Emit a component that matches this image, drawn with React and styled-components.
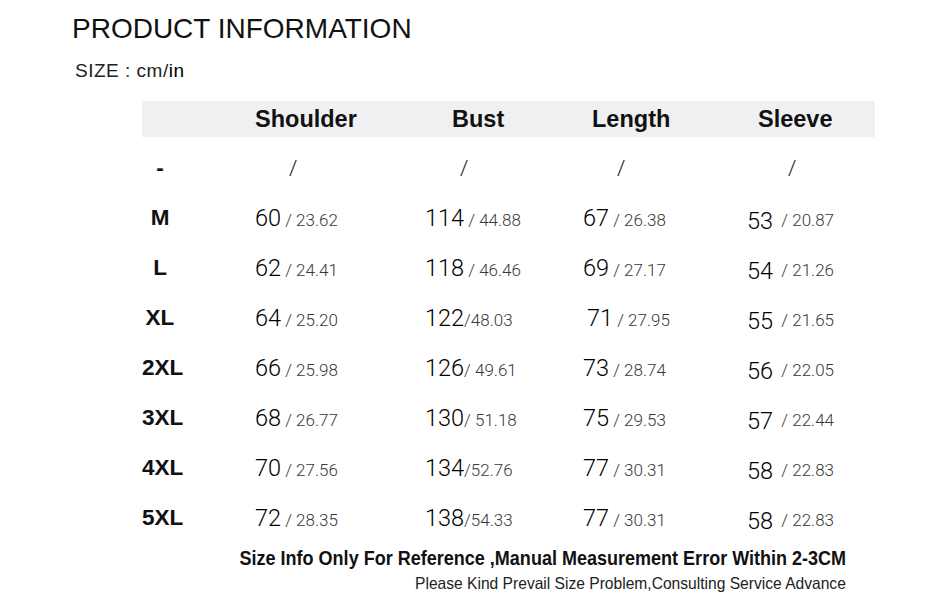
import React from 'react'
import styled, { createGlobalStyle } from 'styled-components'

const GlobalStyle = createGlobalStyle`
  html, body {
    margin: 0;
    padding: 0;
    background: #fff;
  }
  body {
    font-family: "Liberation Sans", Arial, sans-serif;
    color: #111;
  }
`;

const columns = [
  { title: 'Shoulder', headPad: 0, slashPad: 34 },
  { title: 'Bust', headPad: 27, slashPad: 35 },
  { title: 'Length', headPad: 9, slashPad: 34 },
  { title: 'Sleeve', headPad: 11, slashPad: 41, drop: 3 },
];

const rows = [
  { size: 'M', values: [['60', ' / 23.62'], ['114', ' / 44.88'], ['67', ' / 26.38'], ['53', '  / 20.87']] },
  { size: 'L', values: [['62', ' / 24.41'], ['118', ' / 46.46'], ['69', ' / 27.17'], ['54', '  / 21.26']] },
  { size: 'XL', values: [['64', ' / 25.20'], ['122', '/48.03'], ['71', ' / 27.95', 4], ['55', '  / 21.65']] },
  { size: '2XL', values: [['66', ' / 25.98'], ['126', '/ 49.61'], ['73', ' / 28.74'], ['56', '  / 22.05']] },
  { size: '3XL', values: [['68', ' / 26.77'], ['130', '/ 51.18'], ['75', ' / 29.53'], ['57', '  / 22.44']] },
  { size: '4XL', values: [['70', ' / 27.56'], ['134', '/52.76'], ['77', ' / 30.31'], ['58', '  / 22.83']] },
  { size: '5XL', values: [['72', ' / 28.35'], ['138', '/54.33'], ['77', ' / 30.31'], ['58', '  / 22.83']] },
];

const App = () => {
  return (
    <Page>
      <GlobalStyle />
      <Title>PRODUCT INFORMATION</Title>
      <Unit>SIZE : cm/<b>in</b></Unit>
      <Table>
        <HeadBand>
          <Cell />
          {columns.map(c => (
            <HeadLabel key={c.title} pad={c.headPad}>{c.title}</HeadLabel>
          ))}
        </HeadBand>
        <Row>
          <Cell><SizeLabel>-</SizeLabel></Cell>
          {columns.map(c => (
            <Slash key={c.title} pad={c.slashPad}>/</Slash>
          ))}
        </Row>
        {rows.map(r => (
          <Row key={r.size}>
            <Cell><SizeLabel>{r.size}</SizeLabel></Cell>
            {r.values.map(([cm, inch, shift], i) => (
              <Value key={i} pad={shift || 0}>
                <Big drop={columns[i].drop || 0}>{cm}</Big>
                <Small>{inch}</Small>
              </Value>
            ))}
          </Row>
        ))}
      </Table>
      <Notes>
        <NoteMain>Size Info Only For Reference ,Manual Measurement Error Within 2-3CM</NoteMain>
        <NoteSub>Please Kind Prevail Size Problem,Consulting Service Advance</NoteSub>
      </Notes>
    </Page>
  )
};

const Page = styled.div`
  width: 950px;
  height: 598px;
  overflow: hidden;
  padding-top: 12px;
  box-sizing: border-box;
`;

const Title = styled.h1`
  margin: 0 0 0 72px;
  font-weight: normal;
  font-size: 28px;
  line-height: 34px;
  color: #111;
`;

const Unit = styled.div`
  margin: 13px 0 0 75px;
  font-size: 19px;
  letter-spacing: 0.5px;
  line-height: 24px;
  color: #222;
  b {
    font-weight: normal;
    color: #000;
  }
`;

const Table = styled.div`
  margin: 18px 0 0 142px;
  width: 733px;
`;

const grid = `
  display: grid;
  grid-template-columns: 113px 170px 158px 164px 128px;
  align-items: center;
`;

const HeadBand = styled.div`
  ${grid}
  height: 36px;
  background: #f0f0f2;
  margin-bottom: 6px;
`;

const HeadLabel = styled.div`
  padding-left: ${p => p.pad}px;
  font-weight: bold;
  font-size: 23.5px;
  color: #111;
`;

const Row = styled.div`
  ${grid}
  height: 50px;
`;

const Cell = styled.div``;

const SizeLabel = styled.div`
  width: 36px;
  text-align: center;
  font-weight: bold;
  font-size: 22.5px;
  color: #111;
`;

const Slash = styled.div`
  padding-left: ${p => p.pad}px;
  font-family: Roboto, sans-serif;
  font-weight: 300;
  font-size: 21px;
  color: #111;
`;

const Value = styled.div`
  padding-left: ${p => p.pad}px;
  font-family: Roboto, sans-serif;
  font-weight: 300;
  white-space: pre;
  display: flex;
  align-items: baseline;
`;

const Big = styled.span`
  font-size: 23.5px;
  color: #000;
  position: relative;
  top: ${p => p.drop}px;
`;

const Small = styled.span`
  font-size: 17px;
  color: #383838;
`;

const Notes = styled.div`
  width: 846px;
  display: flex;
  flex-direction: column;
  align-items: flex-end;
  margin-top: 2px;
`;

const NoteMain = styled.div`
  font-weight: bold;
  font-size: 20.5px;
  line-height: 26px;
  color: #111;
  white-space: nowrap;
  transform: scaleX(0.879);
  transform-origin: right center;
`;

const NoteSub = styled.div`
  font-size: 16.5px;
  line-height: 24px;
  color: #222;
  white-space: nowrap;
  transform: scaleX(0.945);
  transform-origin: right center;
`;

export default App
